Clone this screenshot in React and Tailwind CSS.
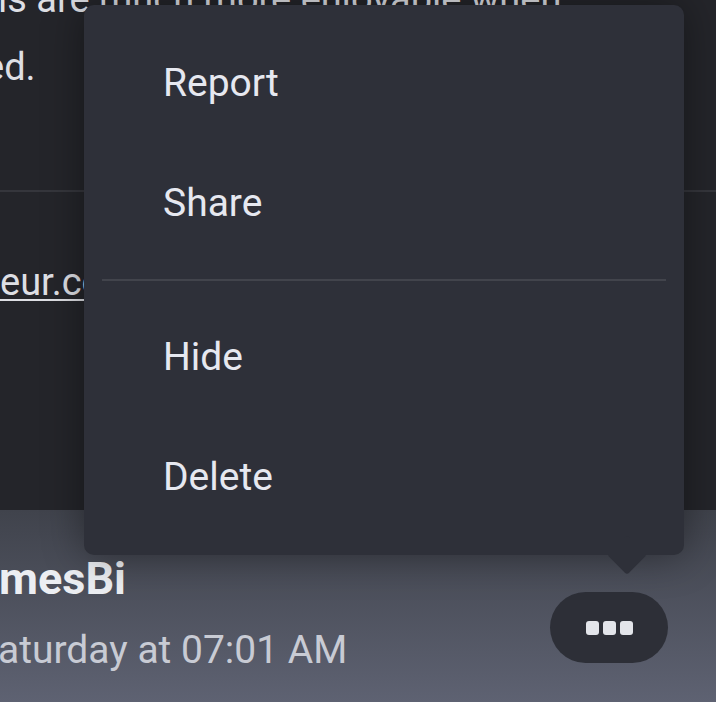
import React from 'react';

const MenuItem = ({ label }) => (
    <div className="h-[120px] flex items-center pl-[79px] text-[39px] leading-[44px] text-[#e6e8f0] cursor-pointer">
        {label}
    </div>
);

const App = () => {
    return (
        <div className="relative w-[716px] h-[702px] overflow-hidden bg-[#24252a] font-['Roboto',sans-serif]">
            {/* post body */}
            <div className="h-[510px] flex flex-col">
                <div className="-mt-[35px] text-[38px] leading-[68px] text-[#dedfe4] whitespace-nowrap">
                    <div className="-ml-[2px]">is are much more enjoyable when</div>
                    <div className="-ml-[16px]">ed.</div>
                </div>
                <div className="mt-[89px] border-t-2 border-[#35363c]"></div>
                <div className="pt-[68px] text-[38px] leading-[44px] text-[#dedfe4] whitespace-nowrap">
                    <a href="#" className="underline decoration-2 underline-offset-[4px]">eur.com/emojis</a>
                </div>
            </div>

            {/* post footer */}
            <div className="h-[192px] bg-gradient-to-b from-[#40434c] to-[#5e6272] flex justify-between pt-[44px] pr-[48px]">
                <div className="flex flex-col gap-[24px] whitespace-nowrap">
                    <div className="-ml-[1px] text-[45px] leading-[50px] font-bold text-[#eceef2]">mesBi</div>
                    <div className="-ml-[2px] text-[39px] leading-[44px] text-[#c8cbd4]">aturday at 07:01 AM</div>
                </div>
                <button className="mt-[38px] w-[118px] h-[71px] rounded-full bg-[#2d2f37] flex items-center justify-center gap-[4px]">
                    <span className="w-[13px] h-[14px] rounded-[3px] bg-[#e3e5ea]"></span>
                    <span className="w-[13px] h-[14px] rounded-[3px] bg-[#e3e5ea]"></span>
                    <span className="w-[13px] h-[14px] rounded-[3px] bg-[#e3e5ea]"></span>
                </button>
            </div>

            {/* dropdown menu */}
            <div className="absolute left-[84px] top-[5px] w-[600px] h-[550px] rounded-[10px] bg-[#2e3039] shadow-[0_0_40px_rgba(0,0,0,0.4)] py-[18px]">
                <MenuItem label="Report" />
                <MenuItem label="Share" />
                <div className="h-[34px] flex items-center px-[18px]">
                    <div className="w-full h-[2px] bg-[#42444c]"></div>
                </div>
                <MenuItem label="Hide" />
                <MenuItem label="Delete" />
                <div className="absolute left-[529px] top-[536px] w-[28px] h-[28px] rotate-45 rounded-[3px] bg-[#2e3039]"></div>
            </div>
        </div>
    );
};

export default App;
